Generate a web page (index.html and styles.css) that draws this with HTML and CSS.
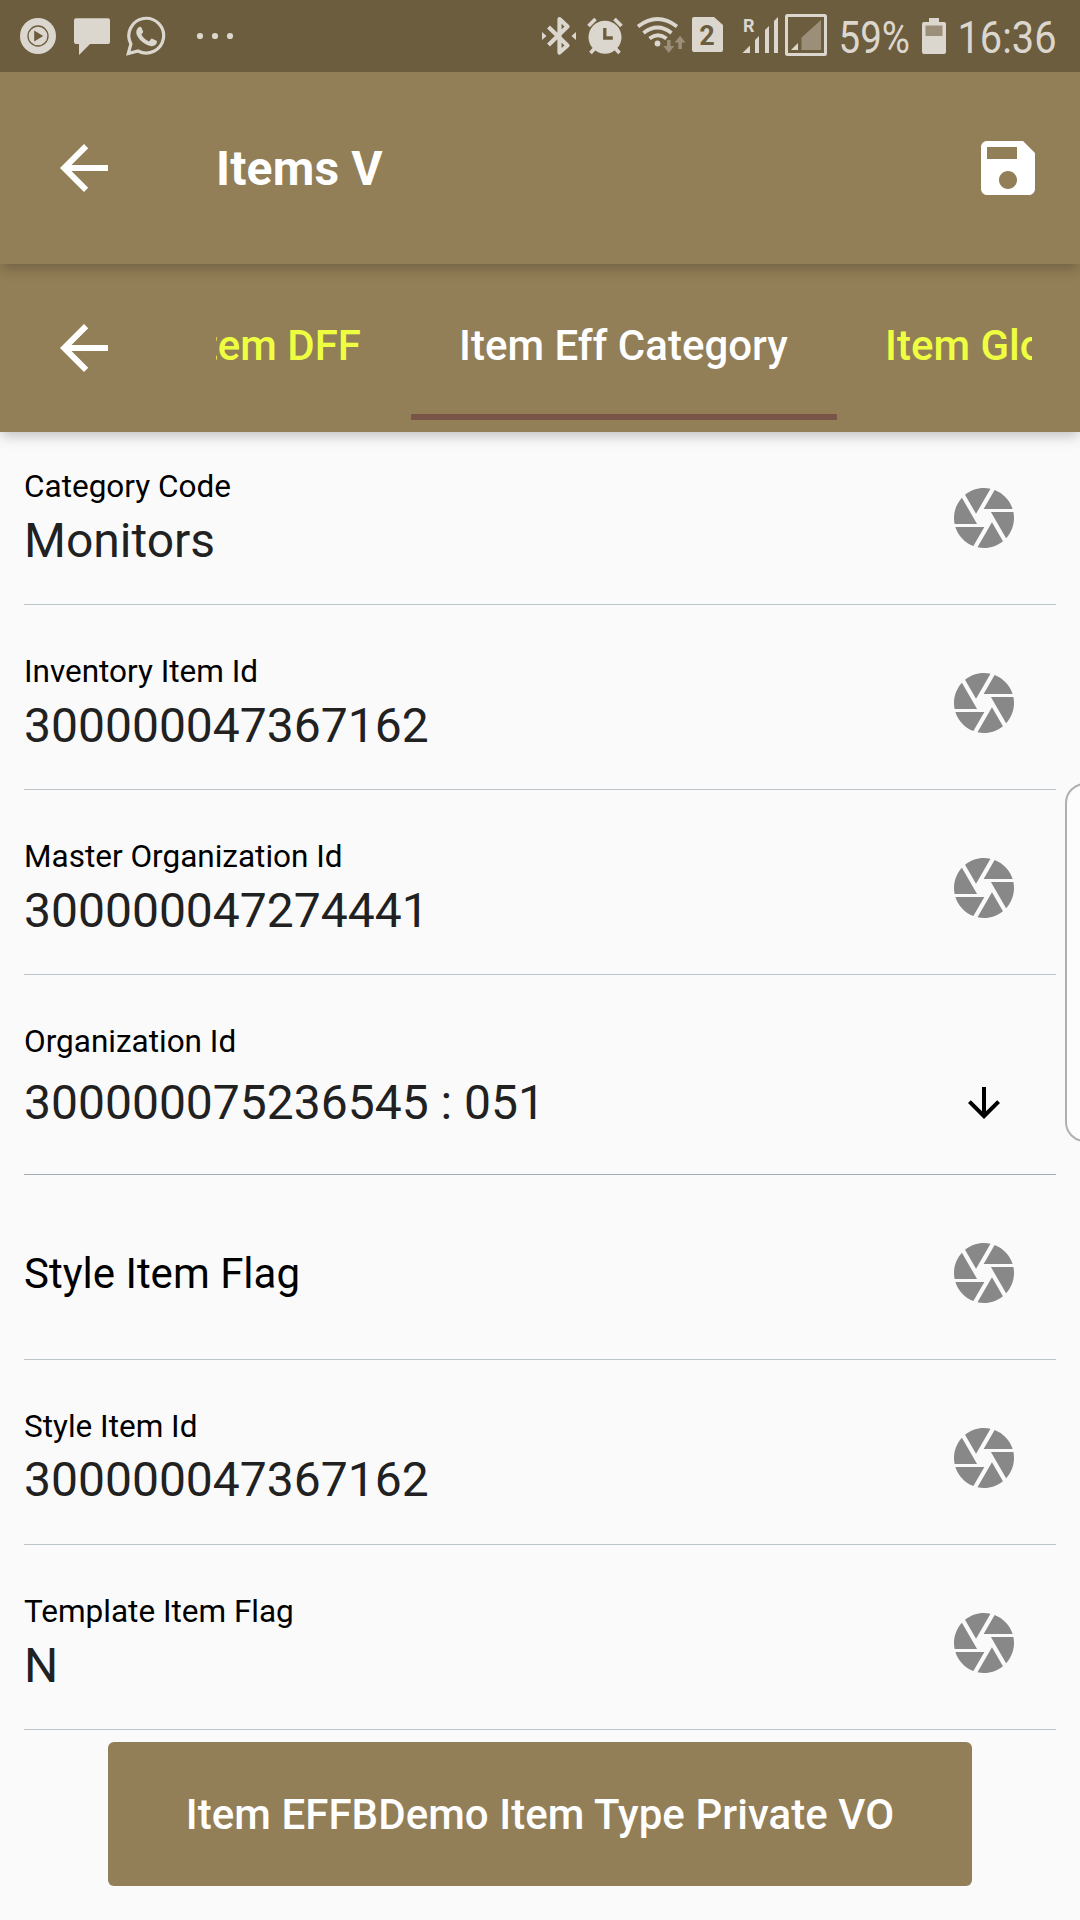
FILE: index.html
```html
<!DOCTYPE html>
<html lang="en">
<head>
<meta charset="utf-8">
<title>Items V</title>
<link rel="stylesheet" href="styles.css">
</head>
<body>
<svg class="sprite" aria-hidden="true">
  <symbol id="back" viewBox="0 0 24 24"><path d="M20 11H7.83l5.59-5.59L12 4l-8 8 8 8 1.41-1.41L7.83 13H20v-2z"/></symbol>
  <symbol id="down" viewBox="0 0 24 24"><path d="M20 12l-1.41-1.41L13 16.17V4h-2v12.17l-5.58-5.59L4 12l8 8 8-8z"/></symbol>
  <symbol id="save" viewBox="0 0 24 24"><path d="M17 3H5c-1.11 0-2 .9-2 2v14c0 1.1.89 2 2 2h14c1.1 0 2-.9 2-2V7l-4-4zm-5 16c-1.66 0-3-1.34-3-3s1.34-3 3-3 3 1.34 3 3-1.34 3-3 3zm3-10H5V5h10v4z"/></symbol>
  <symbol id="camera" viewBox="0 0 24 24"><path d="M9.4 10.5l4.77-8.26C13.47 2.09 12.75 2 12 2c-2.4 0-4.6.85-6.32 2.25l3.66 6.35.06-.1zM21.54 9c-.92-2.92-3.15-5.26-6-6.34L11.88 9h9.66zm.26 1h-7.49l.29.5 4.76 8.25C21 16.97 22 14.61 22 12c0-.69-.07-1.35-.2-2zM8.54 12l-3.9-6.75C3.01 7.03 2 9.39 2 12c0 .69.07 1.35.2 2h7.49l-1.15-2zm-6.08 3c.92 2.92 3.15 5.26 6 6.34L12.12 15H2.46zm11.27 0l-3.9 6.76c.7.15 1.42.24 2.17.24 2.4 0 4.6-.85 6.32-2.25l-3.66-6.35-.93 1.6z"/></symbol>
</svg>
<div class="screen">
  <header class="status">
    <div class="status-group">
      <svg width="38" height="38" viewBox="0 0 38 38"><circle cx="19" cy="19" r="18" fill="currentColor"/><circle cx="19" cy="19" r="10" fill="none" stroke="#6c5d3f" stroke-width="1.3"/><path d="M15.2 13.4v11.2l9-5.6z" fill="#6c5d3f"/></svg>
      <svg class="chat" width="38" height="38" viewBox="0 0 38 38"><path d="M3 1.2h32a2 2 0 0 1 2 2V25a2 2 0 0 1-2 2H17L6 38V27H3a2 2 0 0 1-2-2V3.200a2 2 0 0 1 2-2z" fill="currentColor"/></svg>
      <svg class="whatsapp" width="40" height="40" viewBox="0 0 40 40"><path d="M2.300 37.500l2.600-9.600A17.400 17.400 0 1 1 12 35z" fill="none" stroke="currentColor" stroke-width="3.200"/><path d="M13.600 10.700c.8-.2 1.500.1 1.800.8l1.700 4c.2.600 0 1-1.700 3 1.900 3.500 4.500 5.700 7.700 6.900 2.400-2.900 2.500-3 3.200-2.700l4.200 2c.7.400.5 1.600-.1 3-1 2-4.500 3-6.800 2.100-6.300-2-10.200-5.800-12.500-10.300-1.900-4.100 0-7.600 2.500-8.800z" fill="currentColor"/></svg>
      <svg class="more" width="38" height="8" viewBox="0 0 38 8"><circle cx="4" cy="4" r="3.100" fill="currentColor"/><circle cx="19" cy="4" r="3.100" fill="currentColor"/><circle cx="34" cy="4" r="3.100" fill="currentColor"/></svg>
    </div>
    <svg class="indicators" width="540" height="72" viewBox="540 0 540 72" fill="currentColor">
      <g fill="none" stroke="currentColor" stroke-width="4.200" stroke-linejoin="round"><path d="M548.500 27l19 18.500-8 7V19l8 7.500-19 18.500"/></g>
      <path d="M542 32l4.500 4-4.500 4zM576 32l-4.500 4 4.500 4z"/>
      <circle cx="605" cy="37.200" r="16.500"/>
      <path d="M588.500 26l7-7M614.500 19l7 7M595 48l-4.500 5M615 48l4.500 5" fill="none" stroke="currentColor" stroke-width="3.600"/>
      <path d="M604.800 28v10h8" fill="none" stroke="#6c5d3f" stroke-width="3.300"/>
      <g fill="none" stroke="currentColor" stroke-width="3.800"><path d="M638 26.500q19.500-15 39 0M643.500 33q14-11 28 0M649.500 38.500q8.500-6.500 17 0"/></g>
      <circle cx="657.500" cy="43.500" r="2.900"/>
      <path d="M667 40h3.600v6h3.600l-5.400 7-5.400-7h3.600zM678.300 49h3.600v-6.500h3.600l-5.400-6.700-5.400 6.700h3.600z" fill="#9b8f79"/>
      <path d="M694 17h20l9 8v25a2 2 0 0 1-2 2h-27a2 2 0 0 1-2-2V19a2 2 0 0 1 2-2z"/>
      <text class="sim" x="707" y="45" text-anchor="middle">2</text>
      <text class="roaming" x="743" y="32.300" textLength="11.500" lengthAdjust="spacingAndGlyphs">R</text>
      <path d="M742.500 53h7.500v-7.500zM755 40l4-4v17h-4zM765 30l4-4v27h-4zM774 21l4-4v36h-4z"/>
      <rect x="786.500" y="15.500" width="39" height="39" rx="1" fill="none" stroke="currentColor" stroke-width="3"/>
      <path d="M801.500 50V37.500L821 20v30z" fill="#9b8f79"/><path d="M791 50h7v-7z"/>
      <text class="reading" x="838.500" y="53" textLength="71.500" lengthAdjust="spacingAndGlyphs">59%</text>
      <path d="M929 18h10v4h5a2 2 0 0 1 2 2v28a2 2 0 0 1-2 2h-20a2 2 0 0 1-2-2V24a2 2 0 0 1 2-2h5z"/><path d="M925.500 25.500h17v10.500h-17z" fill="#9b8f79"/>
      <text class="reading" x="957.500" y="53" textLength="99" lengthAdjust="spacingAndGlyphs">16:36</text>
    </svg>
  </header>

  <div class="appbar">
    <svg class="icon"><use href="#back"/></svg>
    <h1 class="title">Items V</h1>
    <svg class="icon"><use href="#save"/></svg>
  </div>

  <nav class="tabbar">
    <svg class="icon"><use href="#back"/></svg>
    <div class="tabs">
      <span class="tab scrolled">Item DFF</span>
      <span class="tab active">Item Eff Category</span>
      <span class="tab">Item Global</span>
    </div>
  </nav>

  <main class="form">
    <div class="field"><div class="text"><label>Category Code</label><span class="value">Monitors</span></div><svg class="icon"><use href="#camera"/></svg></div>
    <div class="field"><div class="text"><label>Inventory Item Id</label><span class="value">300000047367162</span></div><svg class="icon"><use href="#camera"/></svg></div>
    <div class="field"><div class="text"><label>Master Organization Id</label><span class="value">300000047274441</span></div><svg class="icon"><use href="#camera"/></svg></div>
    <div class="field select"><div class="text"><label>Organization Id</label><span class="value">300000075236545 : 051</span></div><svg class="icon small"><use href="#down"/></svg></div>
    <div class="field empty"><label>Style Item Flag</label><svg class="icon"><use href="#camera"/></svg></div>
    <div class="field tight"><div class="text"><label>Style Item Id</label><span class="value">300000047367162</span></div><svg class="icon"><use href="#camera"/></svg></div>
    <div class="field"><div class="text"><label>Template Item Flag</label><span class="value">N</span></div><svg class="icon"><use href="#camera"/></svg></div>
    <button class="action">Item EFFBDemo Item Type Private VO</button>
  </main>
  <div class="edge-handle"></div>
</div>
</body>
</html>
```
FILE: styles.css
```css
* { box-sizing: border-box; }
body { margin: 0; font-family: Roboto, sans-serif; background: #fafafa; }
.sprite { display: none; }
.screen { position: relative; width: 1080px; height: 1920px; overflow: hidden; display: flex; flex-direction: column; }
.icon { width: 72px; height: 72px; fill: currentColor; flex: none; }

.status { height: 72px; flex: none; background: #6c5d3f; color: #dcd7ce; display: flex; justify-content: space-between; align-items: center; padding-left: 19px; z-index: 3; }
.status-group { display: flex; align-items: center; }
.chat { margin-left: 16px; }
.whatsapp { margin-left: 15px; }
.more { margin-left: 30px; }
.sim { font-size: 27px; font-weight: 700; fill: #6c5d3f; }
.roaming { font-size: 18px; font-weight: 700; }
.reading { font-size: 45px; }

.appbar, .tabbar { background: #927e57; color: #fff; box-shadow: 0 5px 11px -2px rgba(0, 0, 0, .18), 0 8px 14px rgba(0, 0, 0, .06); display: flex; flex: none; }
.appbar { height: 192px; padding: 60px 36px 0 48px; z-index: 2; }
.title { flex: 1; margin: 1px 0 0 96px; font-size: 48px; line-height: 72px; font-weight: 700; letter-spacing: .15px; }
.tabbar { height: 168px; padding: 0 48px; z-index: 1; }
.tabbar .icon { margin-top: 48px; }
.tabs { margin-left: 96px; width: 816px; height: 156px; display: flex; overflow: hidden; font-size: 42px; font-weight: 500; line-height: 164px; white-space: nowrap; color: #eeff41; }
.tab { flex: none; padding: 0 48px; height: 156px; }
.tab.scrolled { width: 195px; display: flex; justify-content: flex-end; padding-right: 50px; }
.tab.active { width: 426px; color: #fff; border-bottom: 6px solid #795548; }

.form { flex: 1; display: flex; flex-direction: column; padding: 0 24px; margin-top: -12px; }
.field { height: 185px; flex: none; display: flex; justify-content: space-between; padding: 0 36px 0 0; border-bottom: 1px solid #bcc6ca; color: #888; }
.field .icon { margin-top: 62px; }
.field .text { display: flex; flex-direction: column; padding-top: 48px; }
.field label { font-size: 31.5px; line-height: 38px; color: #000; }
.value { font-size: 48px; line-height: 56px; margin-top: 7px; color: #212121; }
.tight .value { margin-top: 6px; }
.select { height: 200px; border-color: #9eaaaf; padding-right: 48px; }
.select .value { margin-top: 14px; }
.field .small { width: 48px; height: 48px; margin-top: 104px; color: #000; }
.field.empty label { font-size: 42px; line-height: 50px; padding-top: 74px; }
.action { flex: none; width: 864px; height: 144px; margin: 12px auto 0; padding: 0; border: 0; border-radius: 6px; background: #927e57; color: #fff; font: 500 42px Roboto, sans-serif; letter-spacing: .06px; }
.edge-handle { position: absolute; left: 1065px; top: 783px; width: 40px; height: 359px; border: 2px solid #b0b0b0; border-radius: 20px; background: #fdfdfd; z-index: 4; }
```
